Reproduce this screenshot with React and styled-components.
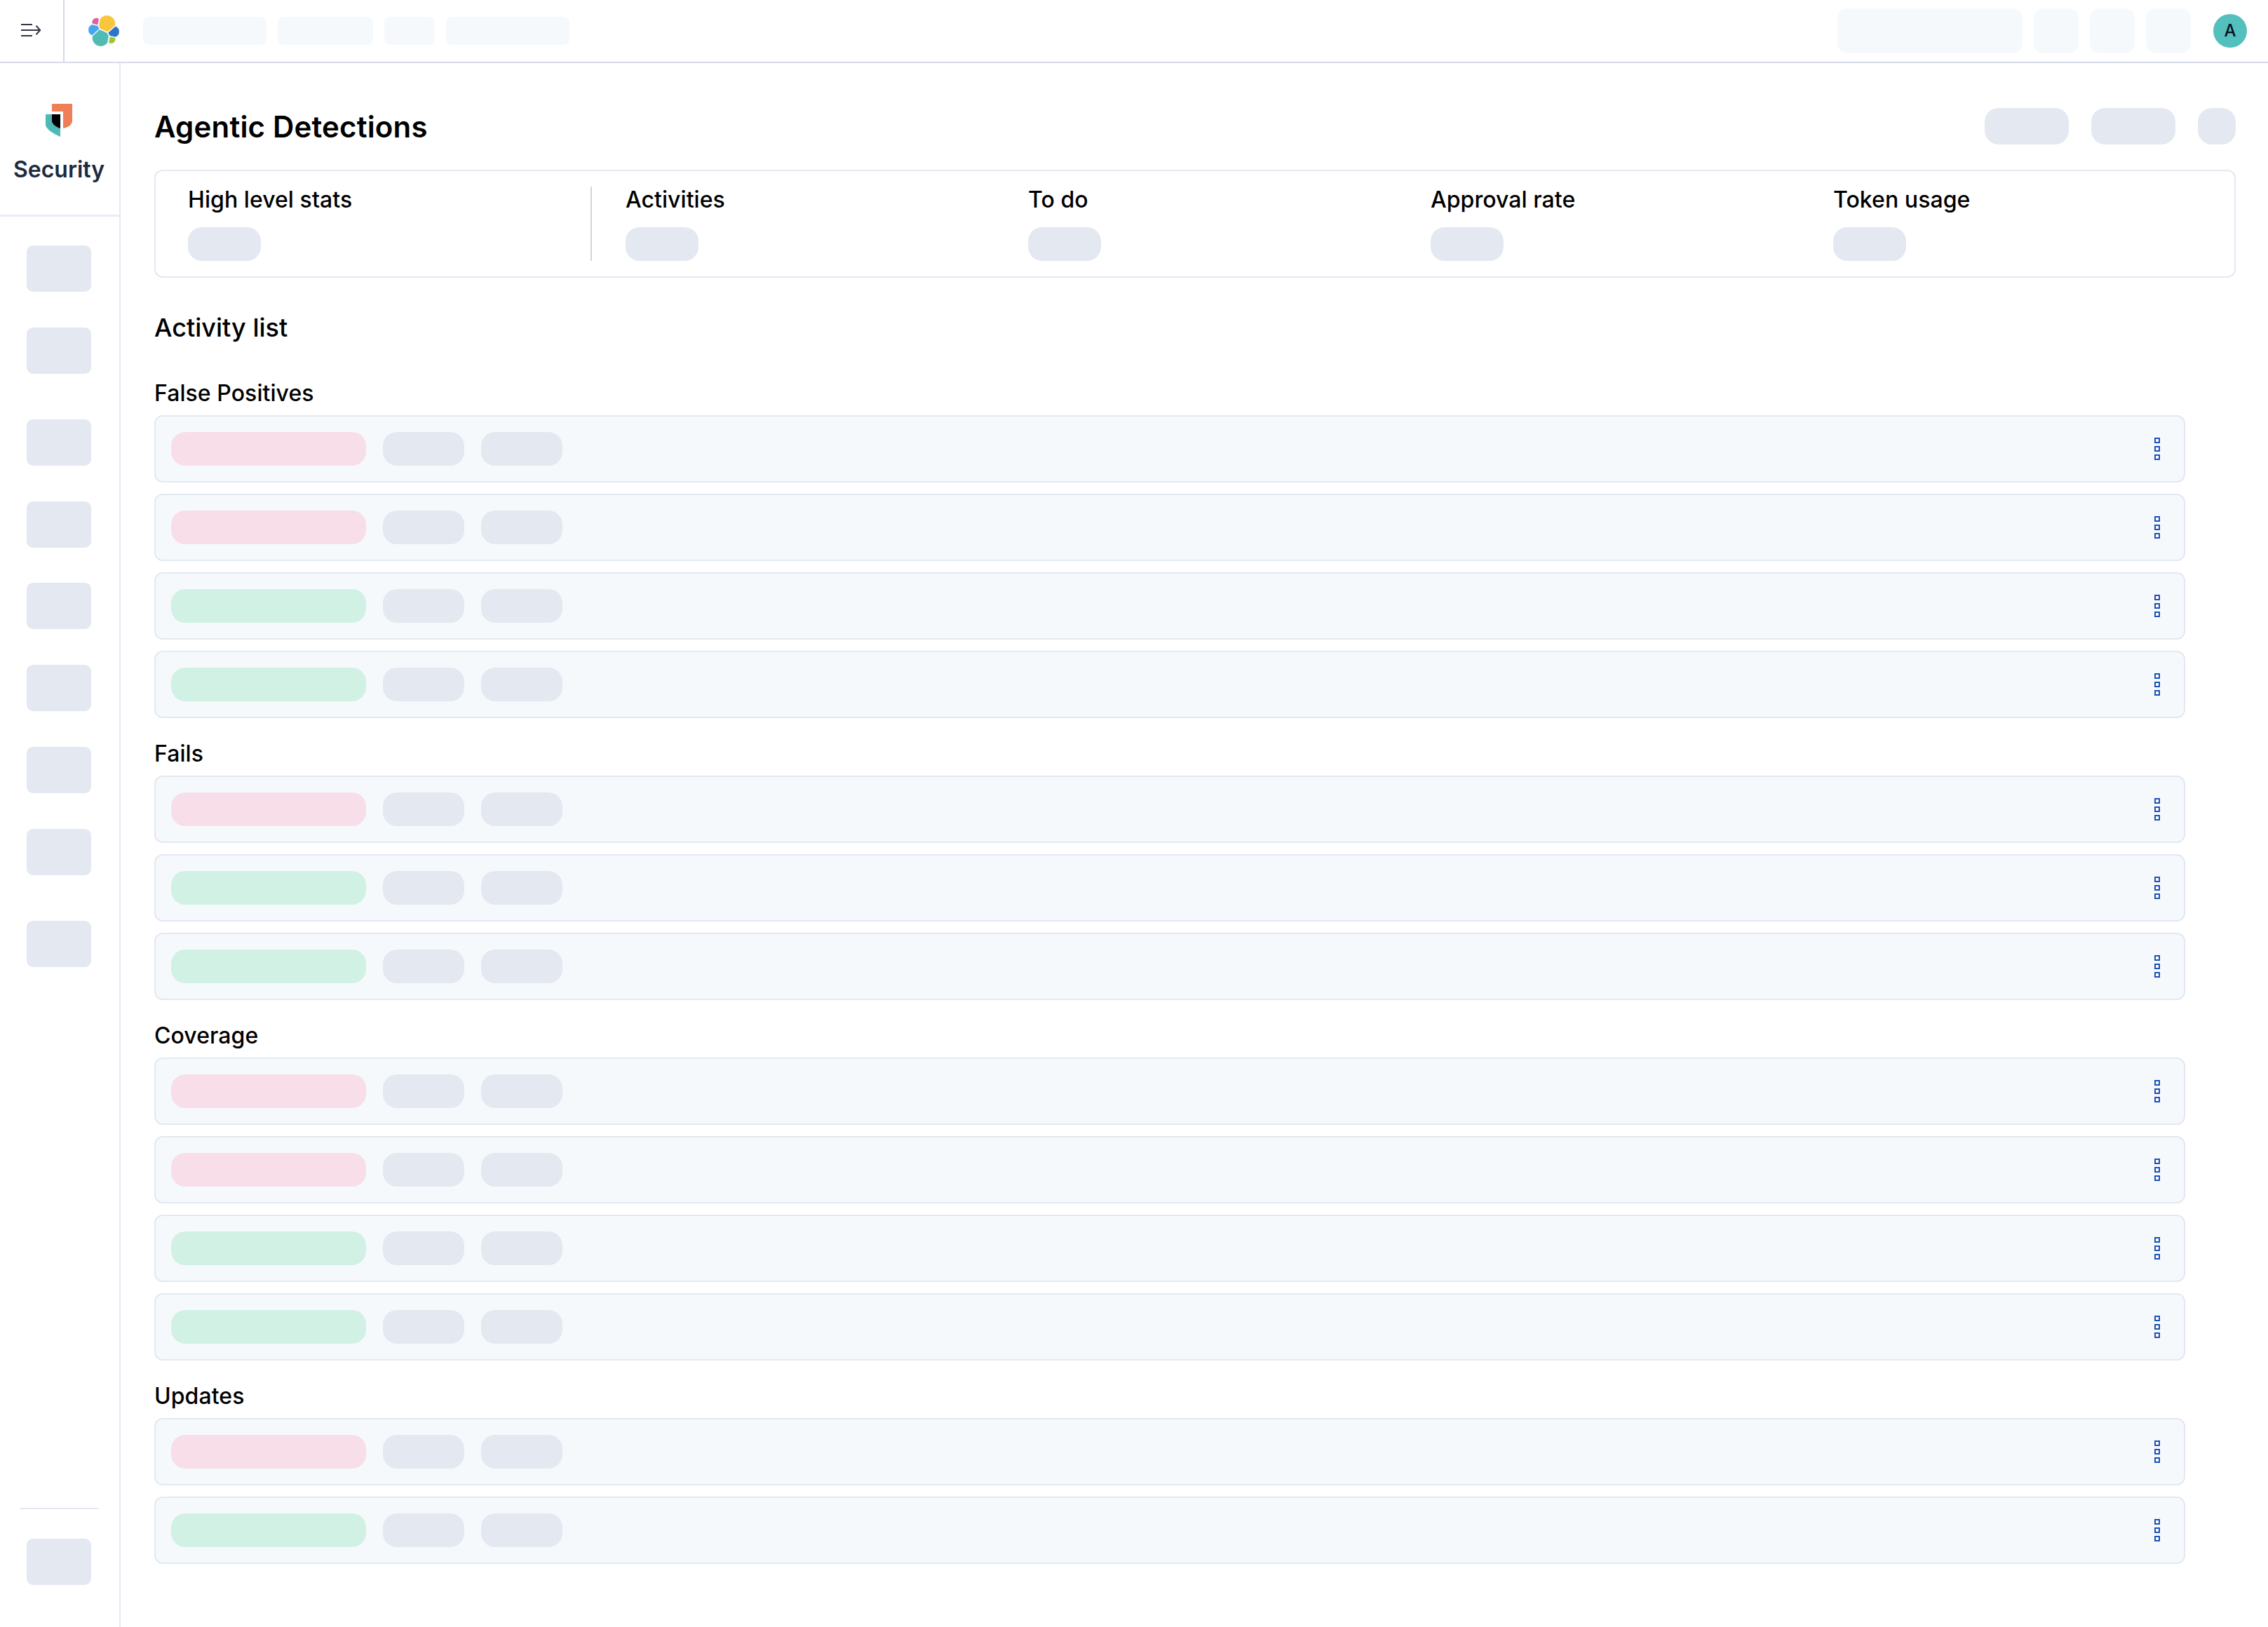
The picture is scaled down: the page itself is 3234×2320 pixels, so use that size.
import styled, { createGlobalStyle } from 'styled-components'

const GlobalStyle = createGlobalStyle`
  * {
    box-sizing: border-box;
  }

  body {
    margin: 0;
    background-color: #ffffff;
    color: #000000;
    font-family: Inter, 'Liberation Sans', sans-serif;
  }
`;

const Page = styled.div`
  display: flex;
  flex-direction: column;
  width: 100%;
  height: 2320px;
  overflow: hidden;
`;

const TopBar = styled.header`
  display: flex;
  align-items: center;
  flex: none;
  height: 90px;
  padding-right: 30px;
  border-bottom: 2px solid #d5d9e8;
`;

const MenuButton = styled.button`
  display: flex;
  align-items: center;
  justify-content: center;
  width: 92px;
  height: 88px;
  padding: 0;
  background: transparent;
  border: none;
  border-right: 2px solid #d5d9e8;
`;

const LogoLink = styled.div`
  display: flex;
  width: 44px;
  height: 44px;
  margin: 0 34px;
`;

const Crumbs = styled.div`
  display: flex;
  gap: 16px;
`;

const Crumb = styled.div`
  width: ${props => props.$width}px;
  height: 40px;
  border-radius: 8px;
  background-color: #f6f9fc;
`;

const HeaderActions = styled.div`
  display: flex;
  align-items: center;
  gap: 16px;
  margin-left: auto;
`;

const HeaderAction = styled.div`
  width: ${props => props.$width}px;
  height: 64px;
  border-radius: 14px;
  background-color: #f6f9fc;
`;

const Avatar = styled.div`
  display: flex;
  align-items: center;
  justify-content: center;
  width: 48px;
  height: 48px;
  margin-left: 16px;
  border-radius: 50%;
  background-color: #54c0be;
  color: #07101f;
  font-size: 24px;
  font-weight: 500;
  line-height: 48px;
`;

const Body = styled.div`
  display: flex;
  flex: 1;
  min-height: 0;
`;

const Sidebar = styled.nav`
  display: flex;
  flex-direction: column;
  flex: none;
  width: 172px;
  border-right: 2px solid #e3e8f2;
`;

const Solution = styled.div`
  display: flex;
  flex-direction: column;
  align-items: center;
  height: 219px;
  padding: 58px 2px 0 0;
  border-bottom: 3px solid #e8edf5;
`;

const SolutionName = styled.span`
  margin-top: 28px;
  color: #1d2a3e;
  font-size: 32px;
  font-weight: 600;
  line-height: 38px;
`;

const NavGroups = styled.div`
  display: flex;
  flex-direction: column;
  align-items: center;
  gap: 64.9px;
  padding: 41px 2px 0 0;
`;

const NavGroup = styled.div`
  display: flex;
  flex-direction: column;
  gap: 50.85px;
`;

const NavItem = styled.div`
  width: 92px;
  height: 66px;
  border-radius: 9px;
  background-color: #e3e8f1;
`;

const SidebarFooter = styled.div`
  display: flex;
  justify-content: center;
  width: 112px;
  margin: auto 0 60px 28px;
  padding-top: 42px;
  border-top: 2px solid #e3e8f2;
`;

const Main = styled.main`
  flex: 1;
  padding: 64px 46px 0 48px;
`;

const TitleRow = styled.div`
  display: flex;
  align-items: center;
  justify-content: space-between;
  height: 52px;
`;

const Title = styled.h1`
  margin: 0;
  padding-top: 2px;
  font-size: 42px;
  font-weight: 600;
  letter-spacing: 0.17px;
  line-height: 52px;
`;

const TitleActions = styled.div`
  display: flex;
  gap: 32px;
`;

const Pill = styled.div`
  width: ${props => props.$width}px;
  height: ${props => props.$height || 48}px;
  border-radius: 20px;
  background-color: ${props => props.$color || '#e3e8f1'};
`;

const StatsCard = styled.section`
  display: flex;
  gap: 48px;
  height: 154px;
  margin-top: 36px;
  padding: 22px 46px;
  border: 2px solid #e3e8f2;
  border-radius: 12px;
`;

const Stat = styled.div`
  display: flex;
  flex: 1;
  flex-direction: column;
  justify-content: space-between;
`;

const StatLabel = styled.span`
  font-size: 32px;
  font-weight: 500;
  letter-spacing: 0.06px;
  line-height: 38px;
`;

const StatDivider = styled.div`
  width: 2px;
  background-color: #d3d4d6;
`;

const ListTitle = styled.h2`
  margin: 49px 0 0;
  font-size: 36px;
  font-weight: 500;
  line-height: 44px;
`;

const Groups = styled.div`
  display: flex;
  flex-direction: column;
  gap: 32px;
  width: 2896px;
  margin-top: 53px;
`;

const Group = styled.section`
  display: flex;
  flex-direction: column;
`;

const GroupTitle = styled.h3`
  margin: 0 0 12px;
  font-size: 32px;
  font-weight: 500;
  letter-spacing: 0.06px;
  line-height: 38px;
`;

const Rows = styled.div`
  display: flex;
  flex-direction: column;
  gap: 16px;
`;

const Row = styled.div`
  display: flex;
  align-items: center;
  gap: 24px;
  height: 96px;
  padding: 0 22px;
  border: 2px solid #e3e8f2;
  border-radius: 12px;
  background-color: #f6f9fc;
`;

const RowMenu = styled.button`
  display: flex;
  flex-direction: column;
  align-items: center;
  gap: 4px;
  width: 32px;
  margin-left: auto;
  padding: 0;
  background: transparent;
  border: none;
`;

const Dot = styled.span`
  width: 8px;
  height: 8px;
  border: 2px solid #1d51b8;
  background-color: #ffffff;
`;

const statusColors = {
  bad: '#f8dee9',
  good: '#d1f1e4',
}

const stats = ['Activities', 'To do', 'Approval rate', 'Token usage']

const groups = [
  { name: 'False Positives', rows: ['bad', 'bad', 'good', 'good'] },
  { name: 'Fails', rows: ['bad', 'good', 'good'] },
  { name: 'Coverage', rows: ['bad', 'bad', 'good', 'good'] },
  { name: 'Updates', rows: ['bad', 'good'] },
]

// Number of items in each sidebar group
const navGroups = [2, 6, 1]

const logoShapes = [
  { color: '#f8c63c', d: 'm12.58 13.787 7.002 3.211 7.066-6.213a7.849 7.849 0 0 0 .152-1.557c0-4.287-3.475-7.774-7.746-7.774a7.74 7.74 0 0 0-6.38 3.36l-1.176 6.124z' },
  { color: '#50bab4', d: 'M5.333 21.214a8 8 0 0 0-.155 1.58c0 4.302 3.488 7.802 7.775 7.802a7.76 7.76 0 0 0 6.415-3.393l1.167-6.089-1.558-2.978-7.03-3.204z' },
  { color: '#e26099', d: 'm5.288 9.067 4.8 1.137L11.14 4.73a3.78 3.78 0 0 0-5.852 4.337z' },
  { color: '#48a5f0', d: 'M4.872 10.214a5.294 5.294 0 0 0-3.503 5.005 5.33 5.33 0 0 0 3.425 4.971l6.734-6.09-1.236-2.644z' },
  { color: '#2b75c7', d: 'm21.848 20.563 5.278 1.234a5.296 5.296 0 0 0 3.502-5.006 5.328 5.328 0 0 0-3.431-4.974l-6.901 6.043z' },
  { color: '#9bc630', d: 'M20.873 27.173a3.778 3.778 0 0 0 6.057-2.998 3.77 3.77 0 0 0-.217-1.276l-4.795-1.121z' },
]

const MenuIcon = () => (
  <svg width="32" height="24" viewBox="29 32 32 24" fill="none" stroke="#343741" strokeWidth="2">
    <path d="M30 35h16M30 43h27M30 51h16" />
    <path d="M51.5 36.8 57.2 43l-5.7 6.2" strokeLinejoin="round" />
  </svg>
)

const ElasticLogo = () => (
  <svg width="44" height="44" viewBox="1.25 1.3 29.5 29.5">
    {logoShapes.map((shape) => (
      <path key={shape.color} d={shape.d} fill={shape.color} stroke={shape.color} strokeWidth="0.22" />
    ))}
  </svg>
)

const SecurityLogo = () => (
  <svg width="38" height="47" viewBox="0 0 38 47">
    <path fill="#ee7f57" d="M9 0h29v24.5c0 5-5.5 9.3-13 10.500V11H9z" />
    <path fill="#4fb9b7" d="M0 15h21v32C9.5 42 0 35.5 0 29.500z" />
    <path fill="#000" d="M9 15h12v20c-6-1.5-12-6.5-12-10.500z" />
  </svg>
)

const App = () => {
  return (
    <>
      <GlobalStyle />
      <Page>
        <TopBar>
          <MenuButton aria-label="Toggle navigation">
            <MenuIcon />
          </MenuButton>
          <LogoLink>
            <ElasticLogo />
          </LogoLink>
          <Crumbs>
            {[176, 136, 72, 176].map((width, index) => (
              <Crumb key={index} $width={width} />
            ))}
          </Crumbs>
          <HeaderActions>
            {[264, 64, 64, 64].map((width, index) => (
              <HeaderAction key={index} $width={width} />
            ))}
            <Avatar>A</Avatar>
          </HeaderActions>
        </TopBar>

        <Body>
          <Sidebar>
            <Solution>
              <SecurityLogo />
              <SolutionName>Security</SolutionName>
            </Solution>
            <NavGroups>
              {navGroups.map((count, groupIndex) => (
                <NavGroup key={groupIndex}>
                  {Array.from({ length: count }, (_, index) => (
                    <NavItem key={index} />
                  ))}
                </NavGroup>
              ))}
            </NavGroups>
            <SidebarFooter>
              <NavItem />
            </SidebarFooter>
          </Sidebar>

          <Main>
            <TitleRow>
              <Title>Agentic Detections</Title>
              <TitleActions>
                <Pill $width={120} $height={52} />
                <Pill $width={120} $height={52} />
                <Pill $width={54} $height={52} />
              </TitleActions>
            </TitleRow>

            <StatsCard>
              <Stat>
                <StatLabel>High level stats</StatLabel>
                <Pill $width={104} />
              </Stat>
              <StatDivider />
              {stats.map((label) => (
                <Stat key={label}>
                  <StatLabel>{label}</StatLabel>
                  <Pill $width={104} />
                </Stat>
              ))}
            </StatsCard>

            <ListTitle>Activity list</ListTitle>

            <Groups>
              {groups.map((group) => (
                <Group key={group.name}>
                  <GroupTitle>{group.name}</GroupTitle>
                  <Rows>
                    {group.rows.map((status, index) => (
                      <Row key={index}>
                        <Pill $width={278} $color={statusColors[status]} />
                        <Pill $width={116} />
                        <Pill $width={116} />
                        <RowMenu aria-label="Row actions">
                          <Dot />
                          <Dot />
                          <Dot />
                        </RowMenu>
                      </Row>
                    ))}
                  </Rows>
                </Group>
              ))}
            </Groups>
          </Main>
        </Body>
      </Page>
    </>
  )
}

export default App
